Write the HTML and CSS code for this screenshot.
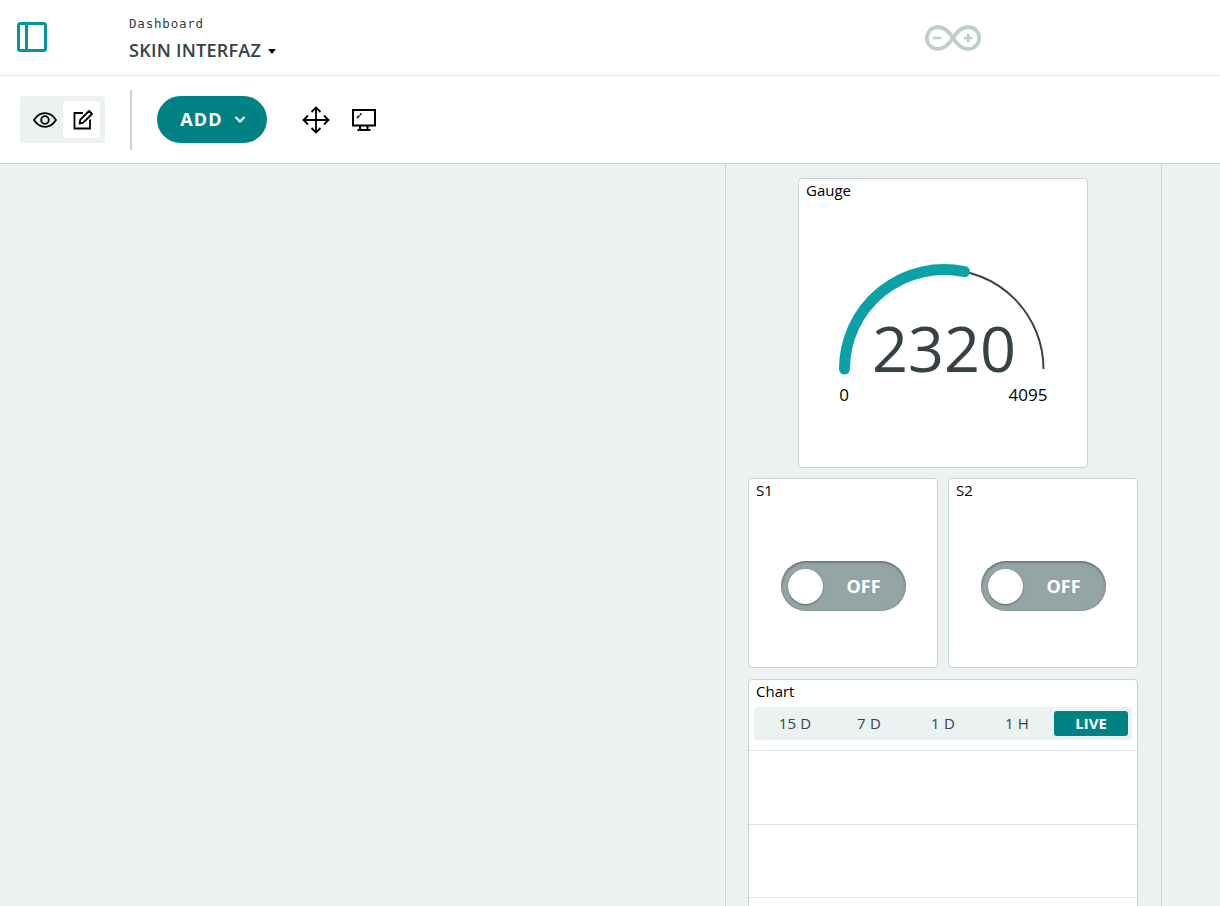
FILE: index.html
```html
<!DOCTYPE html>
<html lang="en">
<head>
    <meta charset="UTF-8">
    <meta name="viewport" content="width=device-width, initial-scale=1.0">
    <title>Dashboard - SKIN INTERFAZ</title>
    <link rel="stylesheet" href="styles.css">
</head>
<body>
    <header class="top-bar">
        <button class="sidebar-btn" aria-label="Toggle sidebar">
            <svg width="32" height="32" viewBox="0 0 32 32" fill="none" stroke="#00979d" stroke-width="3">
                <rect x="2.5" y="2.5" width="27" height="27" rx="2"/>
                <path d="M10.5 2.5v27"/>
            </svg>
        </button>
        <div class="title-block">
            <div class="crumb">Dashboard</div>
            <div class="board-name">SKIN INTERFAZ <span class="caret"></span></div>
        </div>
        <svg class="logo" width="56" height="26" viewBox="2.300 0.600 53.400 24.800" fill="none" stroke="#bfcdcd" stroke-width="3.600">
            <path d="M29 13C25 6.500 21 2.500 14.500 2.500a10.500 10.500 0 0 0 0 21C21 23.500 25 19.500 29 13C33 6.500 37 2.500 43.500 2.500a10.500 10.500 0 0 1 0 21C37 23.500 33 19.500 29 13Z"/>
            <path d="M10 13h8M39.500 13h8M43.500 9v8" stroke-width="2.600"/>
        </svg>
    </header>

    <div class="tool-bar">
        <div class="mode-switch">
            <span class="mode-btn">
                <svg class="eye-icon" width="26" height="26" viewBox="0 0 26 26" fill="none" stroke="#000" stroke-width="1.800">
                    <path d="M2 13c3-4.600 6.600-6.800 11-6.800S21 8.400 24 13c-3 4.600-6.600 6.800-11 6.800S5 17.600 2 13Z"/>
                    <circle cx="13" cy="13" r="3.800"/>
                </svg>
            </span>
            <span class="mode-btn active">
                <svg class="pen-icon" width="24" height="24" viewBox="0 0 24 24" fill="none" stroke="#000" stroke-width="1.800">
                    <path d="M13 5H4.500v15.500H20V11.500"/>
                    <path d="M9.500 15.500l.8-3.800L19 3l3 3-8.700 8.700-3.800.8Z" stroke-linejoin="round"/>
                </svg>
            </span>
        </div>
        <div class="divider"></div>
        <button class="add-btn"><span>ADD</span>
            <svg width="14" height="14" viewBox="0 0 14 14" fill="none" stroke="#fff" stroke-width="2"><path d="M2.500 5l4.500 4.500L11.500 5"/></svg>
        </button>
        <svg class="move-icon" width="28" height="28" viewBox="0 0 28 28" fill="none" stroke="#000" stroke-width="1.800">
            <path d="M14 1.500v25M1.500 14h25"/>
            <path d="M9.500 6l4.500-4.500L18.500 6M9.500 22l4.500 4.500 4.500-4.500M6 9.500L1.500 14 6 18.500M22 9.500l4.500 4.500-4.500 4.500"/>
        </svg>
        <svg class="screen-icon" width="24" height="24" viewBox="0 0 24 24" fill="none" stroke="#000" stroke-width="2">
            <rect x="1" y="2" width="22" height="15.500"/>
            <path d="M8 17.500V22M15.500 17.500V22M5.500 22h13"/>
            <path d="M5 10l2.500-2.500M8 7l1.500-1.500" stroke-width="1.500"/>
        </svg>
    </div>

    <main class="workspace">
        <div class="empty-area"></div>
        <section class="widget-column">
            <div class="card gauge-card">
                <div class="card-title">Gauge</div>
                <svg class="gauge" width="288" height="230" viewBox="0 0 288 230">
                    <path d="M45.500 168a99.500 99.500 0 0 1 199 0" fill="none" stroke="#374146" stroke-width="2"/>
                    <path d="M45.500 168a99.500 99.500 0 0 1 120-97.300" fill="none" stroke="#0ca1a6" stroke-width="11" stroke-linecap="round"/>
                    <text class="gauge-value" x="145" y="171" text-anchor="middle">2320</text>
                    <text class="gauge-limit" x="45" y="200" text-anchor="middle">0</text>
                    <text class="gauge-limit" x="229" y="200" text-anchor="middle">4095</text>
                </svg>
            </div>
            <div class="switch-row">
                <div class="card switch-card">
                    <div class="card-title">S1</div>
                    <div class="switch-wrap">
                        <div class="switch"><span class="knob"></span><span class="switch-label">OFF</span></div>
                    </div>
                </div>
                <div class="card switch-card">
                    <div class="card-title">S2</div>
                    <div class="switch-wrap">
                        <div class="switch"><span class="knob"></span><span class="switch-label">OFF</span></div>
                    </div>
                </div>
            </div>
            <div class="card chart-card">
                <div class="card-title">Chart</div>
                <div class="range-tabs">
                    <span class="range-tab">15 D</span>
                    <span class="range-tab">7 D</span>
                    <span class="range-tab">1 D</span>
                    <span class="range-tab">1 H</span>
                    <span class="range-tab live">LIVE</span>
                </div>
                <div class="chart-rows">
                    <div class="chart-row"></div>
                    <div class="chart-row"></div>
                    <div class="chart-row"></div>
                </div>
            </div>
        </section>
        <div class="empty-area"></div>
    </main>
</body>
</html>
```

FILE: styles.css
```css
html, body {
    height: 100%;
}
body {
    margin: 0;
    font-family: "Open Sans", sans-serif;
    color: #000;
    background-color: #ecf1f1;
    display: flex;
    flex-direction: column;
    overflow: hidden;
}
button {
    font-family: inherit;
    border: none;
    padding: 0;
    background: none;
}
.top-bar {
    height: 75px;
    flex: none;
    display: flex;
    align-items: center;
    background-color: #fff;
    border-bottom: 1px solid #dae3e3;
}
.sidebar-btn {
    display: flex;
    margin-left: 16px;
    margin-top: -1px;
}
.title-block {
    margin-left: 81px;
    margin-top: 2px;
}
.crumb {
    font-family: "DejaVu Sans Mono", monospace;
    font-size: 12.500px;
    line-height: 16px;
    letter-spacing: 0.800px;
    color: #374146;
}
.board-name {
    margin-top: 6px;
    font-size: 18px;
    line-height: 24px;
    font-weight: 600;
    letter-spacing: 0.250px;
    color: #374146;
}
.caret {
    display: inline-block;
    margin-left: 2px;
    vertical-align: 3px;
    border-top: 5px solid #000;
    border-left: 4.500px solid transparent;
    border-right: 4.500px solid transparent;
}
.logo {
    margin-left: 649px;
    margin-top: 1px;
}
.tool-bar {
    height: 87px;
    flex: none;
    display: flex;
    align-items: center;
    background-color: #fff;
    border-bottom: 1px solid #c9d2d2;
}
.mode-switch {
    margin-left: 20px;
    width: 85px;
    height: 47px;
    box-sizing: border-box;
    padding: 5px;
    display: flex;
    justify-content: space-between;
    background-color: #ecf1f1;
    border-radius: 3px;
}
.mode-btn {
    width: 37px;
    height: 37px;
    display: flex;
    align-items: center;
    justify-content: center;
    border-radius: 3px;
}
.mode-btn.active {
    background-color: #fff;
}
.eye-icon {
    margin-left: 3px;
}
.pen-icon {
    margin-left: 1px;
}
.divider {
    width: 2px;
    height: 60px;
    margin-left: 25px;
    background-color: #c9d2d2;
}
.add-btn {
    margin-left: 25px;
    width: 110px;
    height: 47px;
    padding-bottom: 1px;
    padding-left: 3px;
    display: flex;
    align-items: center;
    justify-content: center;
    gap: 10px;
    color: #fff;
    font-size: 18px;
    font-weight: 700;
    letter-spacing: 1.200px;
    background-color: #008184;
    border-radius: 24px;
}
.move-icon {
    margin-left: 35px;
}
.screen-icon {
    margin-left: 22px;
}
.workspace {
    flex: 1;
    min-height: 0;
    display: grid;
    grid-template-columns: 725px 437px 1fr;
}
.widget-column {
    box-sizing: border-box;
    padding: 14px 22px 0;
    border-left: 1px solid #c9d2d2;
    border-right: 1px solid #c9d2d2;
    display: flex;
    flex-direction: column;
    align-items: flex-start;
    overflow: hidden;
}
.card {
    box-sizing: border-box;
    flex: none;
    background-color: #fff;
    border: 1px solid #c9d2d2;
    border-radius: 4px;
}
.card-title {
    padding: 1px 7px 1px;
    font-size: 15px;
    line-height: 20px;
}
.gauge-card {
    width: 290px;
    height: 290px;
    margin-left: 50px;
}
.gauge {
    display: block;
}
.gauge-value {
    font-size: 63px;
    fill: #374146;
}
.gauge-limit {
    font-size: 17px;
    fill: #000;
}
.switch-row {
    display: flex;
    gap: 10px;
    margin-top: 10px;
}
.switch-card {
    width: 190px;
    height: 190px;
    display: flex;
    flex-direction: column;
}
.switch-wrap {
    flex: 1;
    display: flex;
    align-items: center;
    justify-content: center;
    padding-top: 4px;
}
.switch {
    box-sizing: border-box;
    width: 125px;
    height: 50px;
    padding: 0 7px;
    display: flex;
    align-items: center;
    background-color: #95a5a6;
    border-radius: 25px;
    box-shadow: inset 0 1px 3px rgba(0, 0, 0, 0.45);
}
.knob {
    width: 35px;
    height: 35px;
    background-color: #fff;
    border-radius: 50%;
    box-shadow: 0 1px 2px rgba(0, 0, 0, 0.4);
}
.switch-label {
    margin-left: 24px;
    color: #fff;
    font-size: 18px;
    font-weight: 700;
}
.chart-card {
    width: 390px;
    height: 300px;
    margin-top: 11px;
}
.range-tabs {
    box-sizing: border-box;
    height: 33px;
    margin: 5px 5px 0;
    padding: 4px;
    display: flex;
    background-color: #ecf1f1;
    border-radius: 3px;
}
.range-tab {
    flex: 1;
    display: flex;
    align-items: center;
    justify-content: center;
    padding-bottom: 2px;
    font-size: 15px;
    letter-spacing: 0.200px;
    color: #374146;
}
.range-tab.live {
    color: #fff;
    font-weight: 700;
    letter-spacing: 0;
    background-color: #008184;
    border-radius: 3px;
}
.chart-rows {
    margin-top: 10px;
}
.chart-row {
    height: 72.500px;
    border-top: 1px solid #dae3e3;
}
```
